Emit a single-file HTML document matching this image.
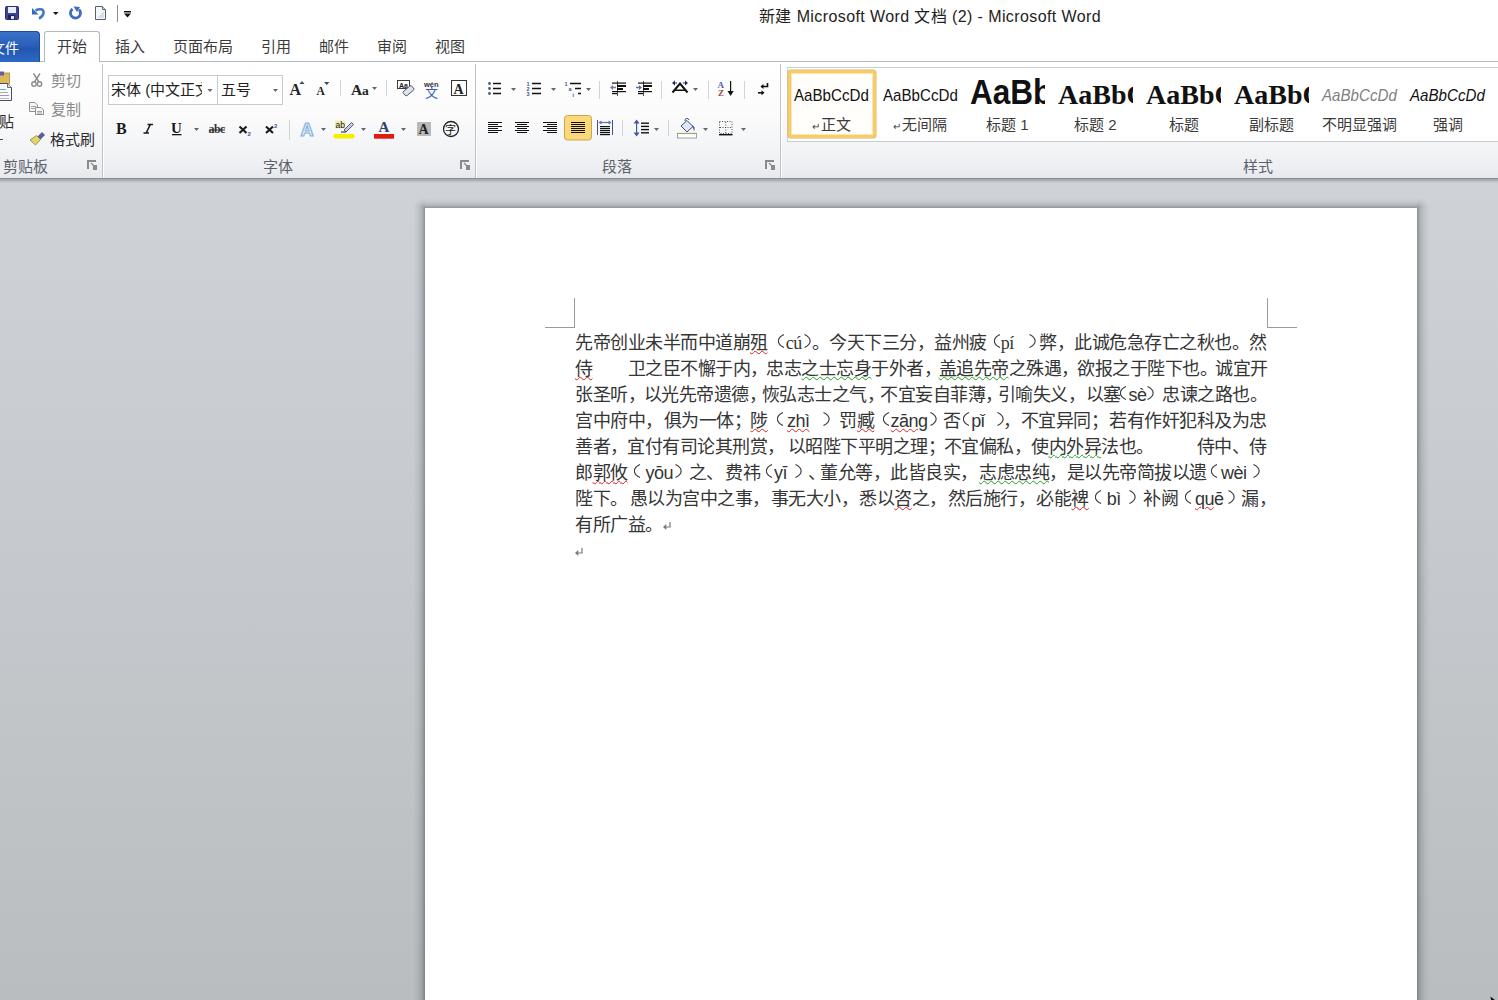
<!DOCTYPE html>
<html lang="zh-CN">
<head>
<meta charset="utf-8">
<style>
*{box-sizing:border-box;margin:0;padding:0}
html,body{width:1498px;height:1000px;overflow:hidden;background:#fff;font-family:"Liberation Sans",sans-serif}
.a{position:absolute}
#title{left:0;top:0;width:1498px;height:31px;background:#fff}
#ttext{left:759px;top:3px;font-size:16px;color:#222;white-space:nowrap;letter-spacing:0.4px}
#tabs{left:0;top:31px;width:1498px;height:30px;background:#fff}
#tabline{left:0;top:61px;width:1498px;height:1px;background:#b3b8bf}
#filetab{left:-2px;top:31px;width:42px;height:31px;background:linear-gradient(#3a72c9,#2a5fb8 45%,#2157b0 55%,#2e69c4);border:1px solid #1e4c9a;border-bottom:none;border-radius:0 4px 0 0;color:#fff;font-size:14px}
#hometab{left:44px;top:31px;width:56px;height:32px;background:#fff;border:1px solid #b3b8bf;border-bottom:none;border-radius:3px 3px 0 0}
.tab{font-size:15px;color:#3b3b3b;top:35px;white-space:nowrap}
#ribbon{left:0;top:62px;width:1498px;height:116px;background:linear-gradient(#ffffff 0%,#fbfbfc 45%,#f3f4f6 75%,#eceef1 92%,#e6e8eb 100%)}
#rbline{left:0;top:178px;width:1498px;height:1px;background:#8c9197}
#rbshadow{left:0;top:179px;width:1498px;height:4px;background:linear-gradient(rgba(110,115,122,0.5),rgba(150,155,160,0))}
.sep{width:1px;background:linear-gradient(rgba(200,204,210,0.2),#c9cdd3 30%,#c9cdd3 80%,rgba(200,204,210,0.5))}
.gsep{top:64px;width:2px;height:114px;background:linear-gradient(90deg,#c0c4ca 50%,#ffffff 50%)}
.glabel{top:155px;font-size:15px;color:#5b626c;white-space:nowrap}
#doc{left:0;top:179px;width:1498px;height:821px;background:linear-gradient(#cfd3d8 0%,#c9cdd2 30%,#bfc3c6 75%,#b9bdc0 100%)}
#page{left:425px;top:208px;width:992px;height:800px;background:#fff;box-shadow:none}
.ln{position:absolute;left:576px;font-size:18px;letter-spacing:-0.5px;color:#353535;white-space:nowrap;height:26px;line-height:26px}
.sty{white-space:nowrap}
.slab{top:113px;font-size:15px;color:#3b3b3b;white-space:nowrap}
.sgm{position:absolute;top:0;white-space:nowrap}
.par{position:absolute;top:4px}
.py{font-family:"Liberation Serif",serif}
.pya{font-family:"Liberation Sans",sans-serif}
.pm{position:relative;display:inline-block;width:8px;height:8px;line-height:0;letter-spacing:0;margin-left:0px;top:-1px}
.sr{text-decoration:underline wavy #e02020;text-decoration-thickness:1px;text-underline-offset:1px}
.sg{text-decoration:underline wavy #20a020;text-decoration-thickness:1px;text-underline-offset:1px}
</style>
</head>
<body>
<div id="title" class="a"></div>
<div id="ttext" class="a">新建 Microsoft Word 文档 (2) - Microsoft Word</div>
<div id="tabs" class="a"></div>
<div id="tabline" class="a"></div>
<div id="filetab" class="a"></div>
<div id="hometab" class="a"></div>
<div class="a tab" style="left:57px">开始</div>
<div class="a tab" style="left:115px">插入</div>
<div class="a tab" style="left:173px">页面布局</div>
<div class="a tab" style="left:261px">引用</div>
<div class="a tab" style="left:319px">邮件</div>
<div class="a tab" style="left:377px">审阅</div>
<div class="a tab" style="left:435px">视图</div>
<div id="ribbon" class="a"></div>
<div id="rbline" class="a"></div>
<div class="a gsep" style="left:102px"></div>
<div class="a gsep" style="left:475px"></div>
<div class="a gsep" style="left:780px"></div>
<div class="a glabel" style="left:3px">剪贴板</div>
<div class="a glabel" style="left:263px">字体</div>
<div class="a glabel" style="left:602px">段落</div>
<div class="a glabel" style="left:1243px">样式</div>
<svg class="a" style="left:0;top:0" width="1498" height="180" viewBox="0 0 1498 180">
<!-- QAT save -->
<g>
<rect x="5.5" y="6.5" width="13" height="13" rx="1" fill="#3d4592" stroke="#2c2f70"/>
<rect x="8" y="7" width="8" height="6" fill="#e8eef8"/>
<rect x="8" y="15" width="7" height="4" fill="#1e2260"/>
<rect x="11" y="16" width="3" height="3" fill="#dfe6f5"/>
</g>
<!-- undo -->
<path d="M35.5 10.5 C 39 8.5, 44 8.5, 43.5 13 C 43 16, 41 17.5, 39 18.5" fill="none" stroke="#3f7ac6" stroke-width="2.6"/>
<path d="M32 8 L32 14.5 L38.5 14.5 Z" fill="#2f6cbd"/>
<path d="M53 12 L58.5 12 L55.75 15 Z" fill="#111"/>
<!-- redo -->
<path d="M79 9.5 A 5 5 0 1 1 72.5 9" fill="none" stroke="#3c6fc0" stroke-width="2.8"/>
<path d="M73.5 6.5 L80 7 L77 12 Z" fill="#3c6fc0"/>
<!-- new -->
<path d="M95.5 6.5 L102.5 6.5 L105.5 9.5 L105.5 19.5 L95.5 19.5 Z" fill="#f4f7fc" stroke="#5a5e66"/>
<path d="M102.5 6.5 L102.5 9.5 L105.5 9.5" fill="#dde3ee" stroke="#5a5e66"/>
<path d="M97 18 L104 18 L104 11 Z" fill="#c9d3e3" opacity="0.7"/>
<rect x="117" y="5" width="1" height="17" fill="#8a8f96"/>
<rect x="124" y="11" width="7" height="1.5" fill="#111"/>
<path d="M124 13.5 L131 13.5 L127.5 17.5 Z" fill="#111"/>
<!-- paste -->
<rect x="-2" y="73" width="11.5" height="11" fill="#dcb95c" stroke="#a88a3a" stroke-width="0.8"/>
<rect x="-1" y="71.5" width="5" height="4" fill="#6b5aa8"/>
<path d="M-1 83.5 L7.5 83.5 L11.5 87.5 L11.5 100.5 L-1 100.5 Z" fill="#f8f9fc" stroke="#4a4f58"/>
<path d="M7.5 83.5 L7.5 87.5 L11.5 87.5" fill="#dde2ea" stroke="#4a4f58" stroke-width="0.8"/>
<rect x="0" y="89" width="6" height="1" fill="#7ba0d8"/>
<rect x="0" y="92" width="8" height="1" fill="#9cc46a"/>
<rect x="0" y="95" width="9" height="1" fill="#a690c8"/>
<rect x="0" y="98" width="9" height="1" fill="#b8bcc4"/>
<rect x="0" y="139" width="3" height="1" fill="#444"/>
<!-- scissors -->
<g fill="none" stroke="#8d8d8d" stroke-width="1.4">
<path d="M33.5 73.5 L39 82"/><path d="M40 73.5 L34.5 82"/>
<circle cx="34" cy="84" r="2.2"/><circle cx="39.5" cy="84" r="2.2"/>
</g>
<!-- copy -->
<g fill="#f6f6f6" stroke="#8f8f8f" stroke-width="1">
<path d="M29.5 102.5 L35 102.5 L37.5 105 L37.5 111.5 L29.5 111.5 Z"/>
<path d="M35.5 107.5 L41 107.5 L43.5 110 L43.5 114.5 L35.5 114.5 Z"/>
</g>
<g stroke="#a3a3a3" stroke-width="1"><path d="M31 106.5h5M31 108.5h5M37 111.5h5M37 113h5"/></g>
<!-- format painter -->
<path d="M37.5 137 L42 132.5 L44.5 135 L40 139.5 Z" fill="#5b5f9e" stroke="#3b3f7a" stroke-width="0.7"/>
<path d="M30 140 L36.5 135.5 L40.5 139.5 L35.5 145 Z" fill="#e3d36d" stroke="#8c8239" stroke-width="0.8"/>
</svg>
<div class="a" style="left:-9px;top:37px;font-size:14px;color:#fff;white-space:nowrap">文件</div>
<div class="a" style="left:-16px;top:110px;font-size:15px;color:#2b2b2b;white-space:nowrap">粘贴</div>
<div class="a" style="left:51px;top:69px;font-size:15px;color:#8a8a8a;white-space:nowrap">剪切</div>
<div class="a" style="left:51px;top:98px;font-size:15px;color:#8a8a8a;white-space:nowrap">复制</div>
<div class="a" style="left:50px;top:128px;font-size:15px;color:#2b2b2b;white-space:nowrap">格式刷</div>
<svg class="a" style="left:0;top:0" width="1498" height="180" viewBox="0 0 1498 180">
<!-- font combos -->
<rect x="108.5" y="75.5" width="109" height="29" fill="#fff" stroke="#c6cad1"/>
<rect x="217.5" y="75.5" width="65" height="29" fill="#fff" stroke="#c6cad1"/>
<path d="M207.5 89 L212.5 89 L210 92 Z" fill="#666"/>
<path d="M273 89 L278 89 L275.5 92 Z" fill="#666"/>
<g font-family="Liberation Serif" font-weight="bold" fill="#222">
<text x="289.5" y="94.5" font-size="16">A</text>
<text x="316.5" y="94.5" font-size="11.5">A</text>
<text x="351" y="94.5" font-size="15.5">A</text>
<text x="362" y="94.5" font-size="13.5" font-weight="bold">a</text>
</g>
<path d="M299.5 84 L304.5 84 L302 81 Z" fill="#3e4a63"/>
<path d="M324 82 L329.5 82 L326.75 85 Z" fill="#3e4a63"/>
<path d="M372 87 L377 87 L374.5 90 Z" fill="#666"/>
<rect x="340" y="80" width="1" height="16" fill="#d0d3d8"/>
<rect x="386" y="80" width="1" height="16" fill="#d0d3d8"/>
<!-- clear formatting -->
<rect x="397.5" y="80.5" width="12" height="8" fill="#fff" stroke="#3a3a3a"/>
<text x="399" y="87.5" font-family="Liberation Sans" font-weight="bold" font-size="7" fill="#222">Aa</text>
<rect x="403" y="88" width="11" height="5.5" rx="1.5" transform="rotate(-40 408.5 90.75)" fill="#dde4ee" stroke="#4a5060" stroke-width="0.9"/>
<!-- phonetic -->
<text x="424" y="87" font-family="Liberation Sans" font-weight="bold" font-size="7.5" fill="#333">wén</text>
<text x="424.5" y="96.5" font-family="Liberation Sans" font-size="13" fill="#3d5cb8">文</text>
<!-- char border -->
<rect x="451.5" y="80.5" width="15" height="15" fill="#fff" stroke="#333"/>
<text x="453.5" y="93.5" font-family="Liberation Serif" font-weight="bold" font-size="14" fill="#222">A</text>
<!-- row 2 -->
<g font-family="Liberation Serif" font-weight="bold" fill="#222">
<text x="116" y="133.5" font-size="16" font-family="Liberation Serif" font-weight="bold" fill="#1a1a1a">B</text>
<path d="M147.5 124.5 L153 124.5 M143.5 133 L149 133 M150.3 124.5 L146.2 133" stroke="#1a1a1a" stroke-width="1.6" fill="none"/>
<text x="171" y="133" font-size="15" font-family="Liberation Serif" font-weight="bold" fill="#1a1a1a">U</text>
</g>
<rect x="172" y="134" width="9.5" height="1.3" fill="#1a1a1a"/>
<path d="M194 128 L199 128 L196.5 131 Z" fill="#666"/>
<text x="208.5" y="133" font-family="Liberation Serif" font-weight="bold" font-size="12" fill="#333" letter-spacing="-0.6">abc</text>
<rect x="209" y="129.5" width="16" height="1" fill="#333"/>
<path d="M239.5 126.5 L246.5 133 M246.5 126.5 L239.5 133" stroke="#1a1a1a" stroke-width="2.1"/>
<text x="247.5" y="135.5" font-family="Liberation Sans" font-weight="bold" font-size="6" fill="#3d5595">2</text>
<path d="M266 126.5 L273 133 M273 126.5 L266 133" stroke="#1a1a1a" stroke-width="2.1"/>
<text x="274" y="127.5" font-family="Liberation Sans" font-weight="bold" font-size="6" fill="#3d5595">2</text>
<rect x="289" y="120" width="1" height="20" fill="#d0d3d8"/>
<!-- text effects -->
<text x="300.5" y="135.5" font-family="Liberation Sans" font-weight="bold" font-size="18" fill="#e6f2fc" stroke="#86b2de" stroke-width="1.2">A</text>
<path d="M321 128 L326 128 L323.5 131 Z" fill="#666"/>
<!-- highlight -->
<rect x="335" y="120.5" width="10" height="8" fill="#f5eca0" opacity="0.8"/>
<text x="335.5" y="127.5" font-family="Liberation Sans" font-size="8.5" fill="#111">ab</text>
<path d="M344 130 L351.5 122.5 L353.5 124.5 L346 132 Z" fill="#c3cce0" stroke="#3e4a78" stroke-width="0.9"/>
<path d="M341 132 L346 132" stroke="#222" stroke-width="1"/>
<rect x="333.5" y="134" width="21" height="4.5" rx="1.5" fill="#f2f000"/>
<path d="M361 128 L366 128 L363.5 131 Z" fill="#666"/>
<!-- font color -->
<text x="378.5" y="132" font-family="Liberation Serif" font-weight="bold" font-size="15" fill="#2e3e70">A</text>
<rect x="374" y="134" width="20" height="4.7" fill="#e01b10"/>
<path d="M401 128 L406 128 L403.5 131 Z" fill="#666"/>
<!-- shading -->
<rect x="417" y="122" width="14" height="14" fill="#b9b9b9"/>
<text x="418.5" y="133.5" font-family="Liberation Serif" font-weight="bold" font-size="14" fill="#222">A</text>
<!-- enclosed -->
<circle cx="451" cy="129" r="7.5" fill="none" stroke="#222" stroke-width="1.3"/>
<text x="445" y="134" font-family="Liberation Sans" font-size="11" fill="#111">字</text>
</svg>
<div class="a" style="left:111px;top:78px;font-size:15px;color:#222;white-space:nowrap;width:91px;overflow:hidden">宋体 (中文正文</div>
<div class="a" style="left:221px;top:78px;font-size:15px;color:#222;white-space:nowrap">五号</div>
<svg class="a" style="left:0;top:0" width="1498" height="180" viewBox="0 0 1498 180"><circle cx="489.5" cy="83.5" r="1.4" fill="#4a5a7a"/><rect x="493" y="82.75" width="8" height="1.5" fill="#111"/><circle cx="489.5" cy="88.5" r="1.4" fill="#4a5a7a"/><rect x="493" y="87.75" width="8" height="1.5" fill="#111"/><circle cx="489.5" cy="93.5" r="1.4" fill="#4a5a7a"/><rect x="493" y="92.75" width="8" height="1.5" fill="#111"/><path d="M511 88 L516 88 L513.5 91 Z" fill="#666"/><g font-family="Liberation Sans" font-weight="bold" font-size="5.5" fill="#3d5595"><text x="526.5" y="86">1</text><text x="526.5" y="91">2</text><text x="526.5" y="96">3</text></g><rect x="532" y="82.75" width="9" height="1.5" fill="#111"/><rect x="532" y="87.75" width="9" height="1.5" fill="#111"/><rect x="532" y="92.75" width="9" height="1.5" fill="#111"/><path d="M551 88 L556 88 L553.5 91 Z" fill="#666"/><g font-family="Liberation Sans" font-weight="bold" font-size="5.5" fill="#3d5595"><text x="564.5" y="86">1</text><text x="568.5" y="91">a</text><text x="572.5" y="96.5">i</text></g><rect x="570" y="82.75" width="11" height="1.5" fill="#111"/><rect x="575" y="87.75" width="6" height="1.5" fill="#111"/><rect x="578" y="92.75" width="3" height="1.5" fill="#111"/><path d="M586 88 L591 88 L588.5 91 Z" fill="#666"/><rect x="599" y="81" width="1" height="18" fill="#d0d3d8"/><rect x="617" y="81" width="1" height="15" fill="#222" opacity="0.8"/><rect x="612" y="82.5" width="14" height="1.2" fill="#111"/><rect x="617" y="85" width="9" height="2" fill="#111"/><rect x="617" y="88" width="6" height="2" fill="#111"/><rect x="612" y="91" width="14" height="1.2" fill="#111"/><rect x="612" y="93" width="5" height="1.2" fill="#111"/><path d="M610 87.5 L613 85 L613 86.7 L616 86.7 L616 88.3 L613 88.3 L613 90 Z" fill="#6a7aa8"/><rect x="643" y="81" width="1" height="15" fill="#222" opacity="0.8"/><rect x="638" y="82.5" width="14" height="1.2" fill="#111"/><rect x="643" y="85" width="9" height="2" fill="#111"/><rect x="643" y="88" width="6" height="2" fill="#111"/><rect x="638" y="91" width="14" height="1.2" fill="#111"/><rect x="638" y="93" width="5" height="1.2" fill="#111"/><path d="M642 87.5 L639 85 L639 86.7 L636 86.7 L636 88.3 L639 88.3 L639 90 Z" fill="#5a6eb0"/><rect x="661" y="81" width="1" height="18" fill="#d0d3d8"/><path d="M672.5 92.5 L680 83.5 L687.5 92.5" fill="none" stroke="#111" stroke-width="2"/><rect x="675" y="89.5" width="10" height="1.5" fill="#111"/><path d="M672 83 L675 80.5 L675 85.5 Z M688 83 L685 80.5 L685 85.5 Z" fill="#1a2a6a"/><rect x="674" y="82.5" width="3" height="1" fill="#1a2a6a"/><rect x="683" y="82.5" width="3" height="1" fill="#1a2a6a"/><path d="M693 88 L698 88 L695.5 91 Z" fill="#666"/><rect x="708" y="81" width="1" height="18" fill="#d0d3d8"/><text x="717.5" y="88" font-family="Liberation Serif" font-weight="bold" font-size="9" fill="#4a5fa8">A</text><text x="718" y="96" font-family="Liberation Serif" font-weight="bold" font-size="9" fill="#9a4a3a">Z</text><rect x="730" y="81" width="1.2" height="13" fill="#111"/><path d="M727.5 91 L733.7 91 L730.6 96 Z" fill="#111"/><rect x="744" y="81" width="1" height="18" fill="#d0d3d8"/><path d="M767.5 83 L767.5 86.5 L761 86.5" fill="none" stroke="#111" stroke-width="1.6"/><path d="M760.5 86.5 L763.5 84 L763.5 89 Z" fill="#111"/><rect x="758" y="92" width="4" height="1.6" fill="#111"/><path d="M764.5 92.8 L761.5 90.3 L761.5 95.3 Z" fill="#111"/><rect x="488" y="122" width="14" height="1" fill="#111"/><rect x="488" y="124" width="10" height="1" fill="#111"/><rect x="488" y="126" width="14" height="1" fill="#111"/><rect x="488" y="128" width="10" height="1" fill="#111"/><rect x="488" y="130" width="14" height="1" fill="#111"/><rect x="488" y="132" width="10" height="1" fill="#111"/><rect x="515.0" y="122" width="14" height="1" fill="#111"/><rect x="517.0" y="124" width="10" height="1" fill="#111"/><rect x="515.0" y="126" width="14" height="1" fill="#111"/><rect x="517.0" y="128" width="10" height="1" fill="#111"/><rect x="515.0" y="130" width="14" height="1" fill="#111"/><rect x="517.0" y="132" width="10" height="1" fill="#111"/><rect x="543" y="122" width="14" height="1" fill="#111"/><rect x="547" y="124" width="10" height="1" fill="#111"/><rect x="543" y="126" width="14" height="1" fill="#111"/><rect x="547" y="128" width="10" height="1" fill="#111"/><rect x="543" y="130" width="14" height="1" fill="#111"/><rect x="547" y="132" width="10" height="1" fill="#111"/><rect x="564.5" y="115.5" width="27" height="24.5" rx="3" fill="#fbd878" stroke="#c9a552"/><rect x="571" y="122" width="14" height="1" fill="#111"/><rect x="571" y="124" width="14" height="1" fill="#111"/><rect x="571" y="126" width="14" height="1" fill="#111"/><rect x="571" y="128" width="14" height="1" fill="#111"/><rect x="571" y="130" width="14" height="1" fill="#111"/><rect x="571" y="132" width="14" height="1" fill="#111"/><rect x="597" y="120" width="1" height="15" fill="#3d5595"/><rect x="612" y="120" width="1" height="15" fill="#3d5595"/><path d="M599 122.5 L611 122.5" stroke="#5a72b0" stroke-width="1.2"/><path d="M598.5 122.5 L601.5 120.5 L601.5 124.5 Z M611.5 122.5 L608.5 120.5 L608.5 124.5 Z" fill="#5a72b0"/><rect x="600" y="126" width="10" height="1.2" fill="#111"/><rect x="600" y="128" width="10" height="1.2" fill="#111"/><rect x="600" y="130" width="10" height="1.2" fill="#111"/><rect x="600" y="132" width="10" height="1.2" fill="#111"/><rect x="600" y="134" width="10" height="1.2" fill="#111"/><rect x="622" y="120" width="1" height="16" fill="#d0d3d8"/><rect x="636" y="122" width="1.2" height="12" fill="#3d5a9c"/><path d="M633.6 123.5 L636.6 119.5 L639.6 123.5 Z M633.6 132.5 L636.6 136.5 L639.6 132.5 Z" fill="#3d5a9c"/><rect x="641" y="122.5" width="8" height="1.4" fill="#111"/><rect x="641" y="125.7" width="8" height="1.4" fill="#111"/><rect x="641" y="128.9" width="8" height="1.4" fill="#111"/><rect x="641" y="132.1" width="8" height="1.4" fill="#111"/><path d="M654 128 L659 128 L656.5 131 Z" fill="#666"/><rect x="668" y="120" width="1" height="16" fill="#d0d3d8"/><path d="M681 126 L687 120.5 L693 126.5 L687 132 Z" fill="#dfe8f6" stroke="#3a4a7a" stroke-width="1"/><path d="M685 121 A 2 2 0 0 1 689 120" fill="none" stroke="#3a4a7a"/><path d="M692 125 Q696 127 694 131 L693 128 Z" fill="#3d5595"/><rect x="677" y="132.8" width="20" height="1.2" fill="#c8dc3a"/><rect x="677.5" y="133.5" width="19" height="4.5" fill="#fff" stroke="#8a8a8a" stroke-width="0.8"/><path d="M703 128 L708 128 L705.5 131 Z" fill="#666"/><rect x="719.5" y="121.5" width="12.5" height="12" fill="none" stroke="#555" stroke-width="1" stroke-dasharray="1 1.5"/><path d="M725.75 122 L725.75 133 M720 127.5 L732 127.5" stroke="#555" stroke-width="1" stroke-dasharray="1 1.5"/><rect x="719" y="134" width="13.5" height="1.4" fill="#111"/><path d="M741 128 L746 128 L743.5 131 Z" fill="#666"/></svg>
<div class="a" style="left:787px;top:67px;width:720px;height:75px;border:1px solid #c9ced6;background:#fff"></div>
<div class="a" style="left:788px;top:70px;width:88px;height:68px;border:3px solid #f6cb6a;border-radius:3px;box-shadow:inset 0 0 0 1px #fbe7b4, 0 0 0 0.5px #d9b35a;background:#fffefb"></div>
<div class="a sty" style="left:794px;top:86px;font-size:17px;color:#111"><span style="display:inline-block;transform:scaleX(0.89);transform-origin:0 0">AaBbCcDd</span></div>
<div class="a sty" style="left:883px;top:86px;font-size:17px;color:#111"><span style="display:inline-block;transform:scaleX(0.89);transform-origin:0 0">AaBbCcDd</span></div>
<div class="a" style="left:970px;top:72px;width:75px;height:40px;overflow:hidden"><div style="font-size:35px;font-weight:bold;color:#111;white-space:nowrap;transform:scaleX(0.9);transform-origin:0 0">AaBbCc</div></div>
<div class="a sty" style="left:1058px;top:79px;width:75px;overflow:hidden;font-family:'Liberation Serif',serif;font-size:28px;font-weight:bold;color:#111">AaBbCc</div>
<div class="a sty" style="left:1146px;top:79px;width:75px;overflow:hidden;font-family:'Liberation Serif',serif;font-size:28px;font-weight:bold;color:#111">AaBbCc</div>
<div class="a sty" style="left:1234px;top:79px;width:75px;overflow:hidden;font-family:'Liberation Serif',serif;font-size:28px;font-weight:bold;color:#111">AaBbCc</div>
<div class="a sty" style="left:1322px;top:86px;font-size:17px;font-style:italic;color:#7f7f7f"><span style="display:inline-block;transform:scaleX(0.89);transform-origin:0 0">AaBbCcDd</span></div>
<div class="a sty" style="left:1410px;top:86px;font-size:17px;font-style:italic;color:#111"><span style="display:inline-block;transform:scaleX(0.89);transform-origin:0 0">AaBbCcDd</span></div>
<div class="a slab" style="left:812px"><span style="font-size:10px;margin-right:1px">↵</span>正文</div>
<div class="a slab" style="left:893px"><span style="font-size:10px;margin-right:1px">↵</span>无间隔</div>
<div class="a slab" style="left:986px">标题 1</div>
<div class="a slab" style="left:1074px">标题 2</div>
<div class="a slab" style="left:1169px">标题</div>
<div class="a slab" style="left:1249px">副标题</div>
<div class="a slab" style="left:1322px">不明显强调</div>
<div class="a slab" style="left:1433px">强调</div>
<svg class="a" style="left:0;top:0" width="1498" height="180"><path d="M88 169 L88 161 L96 161" fill="none" stroke="#8a8a8a" stroke-width="2"/><rect x="93" y="165" width="4" height="5" fill="#8a8a8a"/><path d="M91 163 L94 166" stroke="#8a8a8a" stroke-width="1.2"/><path d="M461 169 L461 161 L469 161" fill="none" stroke="#8a8a8a" stroke-width="2"/><rect x="466" y="165" width="4" height="5" fill="#8a8a8a"/><path d="M464 163 L467 166" stroke="#8a8a8a" stroke-width="1.2"/><path d="M766 169 L766 161 L774 161" fill="none" stroke="#8a8a8a" stroke-width="2"/><rect x="771" y="165" width="4" height="5" fill="#8a8a8a"/><path d="M769 163 L772 166" stroke="#8a8a8a" stroke-width="1.2"/></svg>
<div id="doc" class="a"></div>
<div class="a" style="left:413px;top:208px;width:12px;height:792px;background:linear-gradient(90deg,rgba(60,64,70,0),rgba(60,64,70,0.08) 40%,rgba(60,64,70,0.22) 75%,rgba(45,48,52,0.42))"></div>
<div class="a" style="left:1417px;top:208px;width:13px;height:792px;background:linear-gradient(270deg,rgba(60,64,70,0),rgba(60,64,70,0.08) 40%,rgba(60,64,70,0.22) 75%,rgba(45,48,52,0.42))"></div>
<div class="a" style="left:425px;top:198px;width:992px;height:10px;background:linear-gradient(0deg,rgba(45,48,52,0.38),rgba(60,64,70,0.2) 25%,rgba(60,64,70,0.06) 60%,rgba(60,64,70,0))"></div>
<div class="a" style="left:413px;top:198px;width:12px;height:10px;background:radial-gradient(ellipse 12px 10px at 100% 100%,rgba(45,48,52,0.36),rgba(60,64,70,0.12) 50%,rgba(60,64,70,0) 100%)"></div>
<div class="a" style="left:1417px;top:198px;width:13px;height:10px;background:radial-gradient(ellipse 13px 10px at 0% 100%,rgba(45,48,52,0.36),rgba(60,64,70,0.12) 50%,rgba(60,64,70,0) 100%)"></div>
<div id="page" class="a"></div>
<div id="rbshadow" class="a"></div>
<div class="a" style="left:574px;top:298px;width:1px;height:30px;background:#9a9a9a"></div>
<div class="a" style="left:545px;top:327px;width:30px;height:1px;background:#9a9a9a"></div>
<div class="a" style="left:1267px;top:298px;width:1px;height:30px;background:#9a9a9a"></div>
<div class="a" style="left:1267px;top:327px;width:30px;height:1px;background:#9a9a9a"></div>
<svg class="a" style="left:1488px;top:994px" width="10" height="6"><path d="M2.5 2.5 L7 6 L3 6 Z" fill="#111"/></svg>
<!--TEXT-->
<div class="ln" style="top:330px"><span class="sgm" style="left:-1px">先帝创业未半而中道崩<span class="sr">殂</span></span><svg class="par" style="left:201.8px" width="7" height="14"><path d="M6 0.5 C-1.5 4,-1.5 10,6 13.5" fill="none" stroke="#3a3a3a" stroke-width="1.15"/></svg><span class="sgm py" style="left:209.7px">cú</span><svg class="par" style="left:228px" width="7" height="14"><path d="M0.5 0.5 C8 4,8 10,0.5 13.5" fill="none" stroke="#3a3a3a" stroke-width="1.15"/></svg><span class="sgm" style="left:236.4px">。</span><span class="sgm" style="left:253px">今天下三分，益州疲</span><svg class="par" style="left:418px" width="7" height="14"><path d="M6 0.5 C-1.5 4,-1.5 10,6 13.5" fill="none" stroke="#3a3a3a" stroke-width="1.15"/></svg><span class="sgm py" style="left:424.7px">pí</span><svg class="par" style="left:453.4px" width="7" height="14"><path d="M0.5 0.5 C8 4,8 10,0.5 13.5" fill="none" stroke="#3a3a3a" stroke-width="1.15"/></svg><span class="sgm" style="left:463px">弊，此诚危急存亡之秋也。然</span></div>
<div class="ln" style="top:356px"><span class="sgm" style="left:-1px"><span class="sr">侍</span></span><span class="sgm" style="left:51.9px">卫之臣不懈于内，</span><span class="sgm" style="left:190.4px">忠志<span class="sg">之士忘身</span>于外者，</span><span class="sgm" style="left:362.6px"><span class="sg">盖追先帝</span>之殊遇，</span><span class="sgm" style="left:501px">欲报之于陛下也。</span><span class="sgm" style="left:639px">诚宜开</span></div>
<div class="ln" style="top:382px"><span class="sgm" style="left:-1px">张圣听，</span><span class="sgm" style="left:67.8px">以光先帝遗德，</span><span class="sgm" style="left:185.8px">恢弘志士之气，</span><span class="sgm" style="left:304px">不宜妄自菲薄，</span><span class="sgm" style="left:421.6px">引喻失义，</span><span class="sgm" style="left:509.7px">以塞</span><svg class="par" style="left:544px" width="7" height="14"><path d="M6 0.5 C-1.5 4,-1.5 10,6 13.5" fill="none" stroke="#3a3a3a" stroke-width="1.15"/></svg><span class="sgm pya" style="left:552.4px">sè</span><svg class="par" style="left:570.8px" width="7" height="14"><path d="M0.5 0.5 C8 4,8 10,0.5 13.5" fill="none" stroke="#3a3a3a" stroke-width="1.15"/></svg><span class="sgm" style="left:586.4px">忠谏之路也。</span></div>
<div class="ln" style="top:408px"><span class="sgm" style="left:-1px">宫中府中，</span><span class="sgm" style="left:87.6px">俱为一体；</span><span class="sgm" style="left:174.4px"><span class="sr">陟</span></span><svg class="par" style="left:200.6px" width="7" height="14"><path d="M6 0.5 C-1.5 4,-1.5 10,6 13.5" fill="none" stroke="#3a3a3a" stroke-width="1.15"/></svg><span class="sgm pya" style="left:210.9px"><span class="sr">zhì</span></span><svg class="par" style="left:246.6px" width="7" height="14"><path d="M0.5 0.5 C8 4,8 10,0.5 13.5" fill="none" stroke="#3a3a3a" stroke-width="1.15"/></svg><span class="sgm" style="left:263.4px">罚<span class="sr">臧</span></span><svg class="par" style="left:307px" width="7" height="14"><path d="M6 0.5 C-1.5 4,-1.5 10,6 13.5" fill="none" stroke="#3a3a3a" stroke-width="1.15"/></svg><span class="sgm pya" style="left:314.6px"><span class="sr">zāng</span></span><svg class="par" style="left:353.8px" width="7" height="14"><path d="M0.5 0.5 C8 4,8 10,0.5 13.5" fill="none" stroke="#3a3a3a" stroke-width="1.15"/></svg><span class="sgm" style="left:366.7px">否</span><svg class="par" style="left:386.8px" width="7" height="14"><path d="M6 0.5 C-1.5 4,-1.5 10,6 13.5" fill="none" stroke="#3a3a3a" stroke-width="1.15"/></svg><span class="sgm pya" style="left:395.3px">pǐ</span><svg class="par" style="left:420.6px" width="7" height="14"><path d="M0.5 0.5 C8 4,8 10,0.5 13.5" fill="none" stroke="#3a3a3a" stroke-width="1.15"/></svg><span class="sgm" style="left:427px">，</span><span class="sgm" style="left:444.8px">不宜异同；</span><span class="sgm" style="left:533px">若有作奸犯科及为忠</span></div>
<div class="ln" style="top:434px"><span class="sgm" style="left:-1px">善者，</span><span class="sgm" style="left:51.4px">宜付有司论其刑赏，</span><span class="sgm" style="left:211.5px">以昭陛下平明之理；</span><span class="sgm" style="left:367.6px">不宜偏私，</span><span class="sgm" style="left:455px">使<span class="sg">内外异</span>法也。</span><span class="sgm" style="left:620.7px">侍中、侍</span></div>
<div class="ln" style="top:460px"><span class="sgm" style="left:-1px">郎<span class="sr">郭攸</span></span><svg class="par" style="left:58px" width="7" height="14"><path d="M6 0.5 C-1.5 4,-1.5 10,6 13.5" fill="none" stroke="#3a3a3a" stroke-width="1.15"/></svg><span class="sgm pya" style="left:69.4px">yōu</span><svg class="par" style="left:99px" width="7" height="14"><path d="M0.5 0.5 C8 4,8 10,0.5 13.5" fill="none" stroke="#3a3a3a" stroke-width="1.15"/></svg><span class="sgm" style="left:112.8px">之、</span><span class="sgm" style="left:149px">费祎</span><svg class="par" style="left:190px" width="7" height="14"><path d="M6 0.5 C-1.5 4,-1.5 10,6 13.5" fill="none" stroke="#3a3a3a" stroke-width="1.15"/></svg><span class="sgm pya" style="left:198px">yī</span><svg class="par" style="left:219px" width="7" height="14"><path d="M0.5 0.5 C8 4,8 10,0.5 13.5" fill="none" stroke="#3a3a3a" stroke-width="1.15"/></svg><span class="sgm" style="left:231.7px">、</span><span class="sgm" style="left:244.3px">董允等，此皆良实，</span><span class="sgm" style="left:403px"><span class="sg">志虑忠纯</span>，是以先帝简拔以遗</span><svg class="par" style="left:635px" width="7" height="14"><path d="M6 0.5 C-1.5 4,-1.5 10,6 13.5" fill="none" stroke="#3a3a3a" stroke-width="1.15"/></svg><span class="sgm pya" style="left:645px">wèi</span><svg class="par" style="left:676.8px" width="7" height="14"><path d="M0.5 0.5 C8 4,8 10,0.5 13.5" fill="none" stroke="#3a3a3a" stroke-width="1.15"/></svg></div>
<div class="ln" style="top:486px"><span class="sgm" style="left:-1px">陛下。</span><span class="sgm" style="left:53.8px">愚以为宫中之事，</span><span class="sgm" style="left:194.7px">事无大小，</span><span class="sgm" style="left:283.3px">悉以<span class="sr">咨</span>之，</span><span class="sgm" style="left:371.8px">然后施行，</span><span class="sgm" style="left:460.4px">必能<span class="sr">裨</span></span><svg class="par" style="left:518.7px" width="7" height="14"><path d="M6 0.5 C-1.5 4,-1.5 10,6 13.5" fill="none" stroke="#3a3a3a" stroke-width="1.15"/></svg><span class="sgm pya" style="left:530.7px">bì</span><svg class="par" style="left:552.5px" width="7" height="14"><path d="M0.5 0.5 C8 4,8 10,0.5 13.5" fill="none" stroke="#3a3a3a" stroke-width="1.15"/></svg><span class="sgm" style="left:567px">补阙</span><svg class="par" style="left:609px" width="7" height="14"><path d="M6 0.5 C-1.5 4,-1.5 10,6 13.5" fill="none" stroke="#3a3a3a" stroke-width="1.15"/></svg><span class="sgm pya" style="left:619px"><span class="sr">qu</span>ē</span><svg class="par" style="left:651.5px" width="7" height="14"><path d="M0.5 0.5 C8 4,8 10,0.5 13.5" fill="none" stroke="#3a3a3a" stroke-width="1.15"/></svg><span class="sgm" style="left:665px">漏，</span></div>
<div class="ln" style="top:512px"><span class="sgm" style="left:-1px">有所广益。<span class="pm"><svg width="8" height="8" viewBox="0 0 8 8" style="vertical-align:0"><path d="M7 0 L7 5 L2 5" fill="none" stroke="#7a7a7a" stroke-width="1.2"/><path d="M0 5 L3.3 2 L3.3 8 Z" fill="#7a7a7a"/></svg></span></span></div>
<div class="ln" style="top:538px;left:575px"><span class="pm"><svg width="8" height="8" viewBox="0 0 8 8" style="vertical-align:0"><path d="M7 0 L7 5 L2 5" fill="none" stroke="#7a7a7a" stroke-width="1.2"/><path d="M0 5 L3.3 2 L3.3 8 Z" fill="#7a7a7a"/></svg></span></div>
</body>
</html>
